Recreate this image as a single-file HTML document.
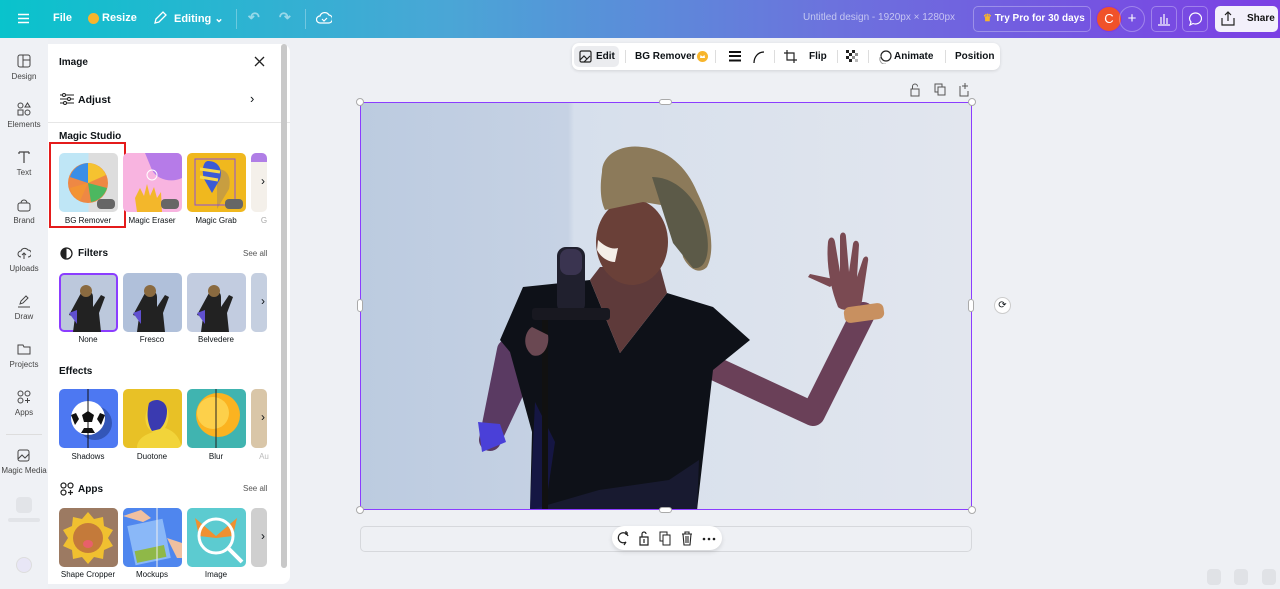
<!DOCTYPE html>
<html><head><meta charset="utf-8">
<style>
*{box-sizing:border-box;margin:0;padding:0}
body{width:1280px;height:589px;overflow:hidden;background:#eef0f4;font-family:"Liberation Sans",sans-serif;color:#0d1216;position:relative}
.top{position:absolute;left:0;top:0;width:1280px;height:38px;background:linear-gradient(90deg,#09c3cc 0%,#4aa6d6 35%,#6c72dd 65%,#7b3fe4 100%);color:#fff;font-size:11px;font-weight:bold}
.top span{position:absolute;top:12px}
.rail{position:absolute;left:0;top:38px;width:48px;height:551px;background:#eff1f5}
.rail .it{position:absolute;left:0;width:48px;text-align:center;font-size:8px;color:#444}
.rail svg{display:block;margin:0 auto 4px}
.panel{position:absolute;left:48px;top:44px;width:242px;height:540px;background:#fff;border-radius:0 8px 8px 0;overflow:hidden}
.panel .t{position:absolute;font-size:10px;font-weight:bold}
.panel .lbl{position:absolute;font-size:8px;text-align:center;width:64px}
.th{position:absolute;width:59px;height:59px;border-radius:5px;overflow:hidden}
.sb{position:absolute;left:281px;top:44px;width:6px;height:524px;background:#eee;border-radius:3px}
.sb div{width:6px;height:524px;background:#c8c8c8;border-radius:3px}
.tb{position:absolute;left:572px;top:43px;width:428px;height:27px;background:#fff;border-radius:7px;box-shadow:0 1px 3px rgba(0,0,0,.12);font-size:10px;font-weight:bold}
.tb span{position:absolute;top:8px}
.h{position:absolute;width:8px;height:8px;border-radius:50%;background:#fff;border:1px solid #aaa}
</style></head><body>
<div class="top">
<svg style="position:absolute;left:18px;top:13px" width="11" height="11"><path d="M0 1.5h11M0 5.5h11M0 9.5h11" stroke="#fff" stroke-width="1.4"/></svg>
<span style="left:53px">File</span>
<svg style="position:absolute;left:88px;top:13px" width="11" height="11"><circle cx="5.5" cy="5.5" r="5.5" fill="#f7b52c"/></svg>
<span style="left:102px">Resize</span>
<svg style="position:absolute;left:153px;top:11px" width="14" height="14"><path d="M2 12l1-4 7-7 3 3-7 7z" stroke="#fff" fill="none" stroke-width="1.3"/></svg>
<span style="left:174px">Editing ⌄</span>
<div style="position:absolute;left:236px;top:9px;width:1px;height:20px;background:rgba(255,255,255,.3)"></div>
<span style="left:248px;color:rgba(255,255,255,.5);font-size:14px;top:9px">↶</span>
<span style="left:279px;color:rgba(255,255,255,.5);font-size:14px;top:9px">↷</span>
<div style="position:absolute;left:305px;top:9px;width:1px;height:20px;background:rgba(255,255,255,.3)"></div>
<svg style="position:absolute;left:316px;top:11px" width="16" height="14"><path d="M4 12a3.5 3.5 0 010-7 5 5 0 019-1 4 4 0 01-1 8z M6 8l2 2 3-3" stroke="#fff" fill="none" stroke-width="1.2"/></svg>
<span style="left:803px;font-weight:normal;color:rgba(255,255,255,.6);font-size:10px">Untitled design - 1920px × 1280px</span>
<div style="position:absolute;left:973px;top:6px;width:118px;height:26px;border:1px solid rgba(255,255,255,.3);border-radius:5px"></div>
<span style="left:983px;font-size:10px;top:13px"><span style="color:#f7b52c;position:static">♛</span> Try Pro for 30 days</span>
<div style="position:absolute;left:1096px;top:6px;width:26px;height:26px;border-radius:50%;background:#f0522a;border:1px solid #7b3fe4;text-align:center;line-height:24px;font-size:13px;font-weight:normal">C</div>
<div style="position:absolute;left:1119px;top:6px;width:26px;height:26px;border-radius:50%;border:1px solid rgba(255,255,255,.3);text-align:center;line-height:24px;font-size:15px;font-weight:normal">+</div>
<div style="position:absolute;left:1151px;top:6px;width:26px;height:26px;border-radius:5px;border:1px solid rgba(255,255,255,.3)"></div>
<svg style="position:absolute;left:1157px;top:12px" width="14" height="14"><path d="M1 13h12M4 12V5M7 12V2M10 12V6" stroke="#fff" stroke-width="1.2"/></svg>
<div style="position:absolute;left:1182px;top:6px;width:26px;height:26px;border-radius:5px;border:1px solid rgba(255,255,255,.3)"></div>
<svg style="position:absolute;left:1188px;top:12px" width="14" height="14"><path d="M7 1a6 5.5 0 11-2 10.5L2 13l1-3A6 5.5 0 017 1z" stroke="#fff" fill="none" stroke-width="1.2"/></svg>
<div style="position:absolute;left:1215px;top:6px;width:63px;height:26px;border-radius:5px;background:#f3f0fb;color:#111;font-size:10px;line-height:26px;padding-left:32px">Share</div>
<svg style="position:absolute;left:1221px;top:11px" width="14" height="15"><path d="M7 10V1M4 4l3-3 3 3M1 7v7h12V7" stroke="#222" fill="none" stroke-width="1.2"/></svg>
</div>

<div class="rail">
<div class="it" style="top:16px"><svg width="14" height="14"><rect x="1" y="1" width="12" height="12" rx="2" stroke="#444" fill="none"/><path d="M6 1v12M6 6h7" stroke="#444"/></svg>Design</div>
<div class="it" style="top:64px"><svg width="14" height="14"><circle cx="3.5" cy="3.5" r="2.5" stroke="#444" fill="none"/><path d="M10.5 1l2.5 4h-5z" stroke="#444" fill="none"/><rect x="1" y="8" width="5" height="5" stroke="#444" fill="none"/><circle cx="10.5" cy="10.5" r="2.5" stroke="#444" fill="none"/></svg>Elements</div>
<div class="it" style="top:112px"><svg width="14" height="14"><path d="M2 2h10M7 2v11M2 2v2M12 2v2" stroke="#444" stroke-width="1.2" fill="none"/></svg>Text</div>
<div class="it" style="top:160px"><svg width="14" height="14"><rect x="1" y="5" width="12" height="8" rx="2" stroke="#444" fill="none"/><path d="M4 5a3 3 0 016 0" stroke="#444" fill="none"/></svg>Brand</div>
<div class="it" style="top:208px"><svg width="14" height="14"><path d="M4 11a3 3 0 010-6 4 4 0 017-1 3.5 3.5 0 010 7M7 13V7M5 9l2-2 2 2" stroke="#444" fill="none"/></svg>Uploads</div>
<div class="it" style="top:256px"><svg width="14" height="14"><path d="M3 10l1-3 5-5 2 2-5 5zM1 13h12" stroke="#444" fill="none"/></svg>Draw</div>
<div class="it" style="top:304px"><svg width="14" height="14"><path d="M1 3h5l1 2h6v7H1z" stroke="#444" fill="none"/></svg>Projects</div>
<div class="it" style="top:352px"><svg width="14" height="14"><circle cx="3.5" cy="3.5" r="2.5" stroke="#444" fill="none"/><circle cx="10.5" cy="3.5" r="2.5" stroke="#444" fill="none"/><circle cx="3.5" cy="10.5" r="2.5" stroke="#444" fill="none"/><path d="M10.5 8v5M8 10.5h5" stroke="#444"/></svg>Apps</div>
<div style="position:absolute;left:6px;top:396px;width:36px;height:1px;background:#ddd"></div>
<div class="it" style="top:410px"><svg width="14" height="14"><rect x="1" y="2" width="11" height="11" rx="2" stroke="#444" fill="none"/><path d="M1 11l4-4 3 3 4-4" stroke="#444" fill="none"/></svg>Magic Media</div>
<div style="position:absolute;left:16px;top:459px;width:16px;height:16px;border-radius:4px;background:#e2e4e8"></div>
<div style="position:absolute;left:8px;top:480px;width:32px;height:4px;border-radius:2px;background:#e2e4e8"></div>
<div style="position:absolute;left:16px;top:519px;width:16px;height:16px;border-radius:50%;background:#e8e6f6;border:1px solid #ddd"></div>
</div>

<div class="panel">
<div class="t" style="left:11px;top:13px">Image</div>
<svg style="position:absolute;left:206px;top:12px" width="11" height="11"><path d="M1 1l9 9M10 1l-9 9" stroke="#222" stroke-width="1.3"/></svg>
<svg style="position:absolute;left:12px;top:49px" width="14" height="12"><path d="M0 2h14M0 6h14M0 10h14" stroke="#222"/><circle cx="4" cy="2" r="1.5" fill="#fff" stroke="#222"/><circle cx="9" cy="6" r="1.5" fill="#fff" stroke="#222"/><circle cx="5" cy="10" r="1.5" fill="#fff" stroke="#222"/></svg>
<div class="t" style="left:30px;top:50px;font-size:10.5px">Adjust</div>
<div style="position:absolute;left:202px;top:47px;font-size:13px">›</div>
<div style="position:absolute;left:0;top:78px;width:242px;height:1px;background:#e6e6e6"></div>
<div class="t" style="left:11px;top:87px">Magic Studio</div>
<div class="th" style="left:11px;top:109px;background:linear-gradient(90deg,#bfe6f6 50%,#ddd 50%)"><svg width="59" height="59"><circle cx="29" cy="30" r="20" fill="#e84"/><path d="M29 10a20 20 0 00-18 14l18 6z" fill="#3a8ee6"/><path d="M29 10a20 20 0 0118 12l-18 8z" fill="#f5c230"/><path d="M11 35a20 20 0 0010 13l8-18z" fill="#f39433"/><path d="M48 35a20 20 0 01-16 14l-3-19z" fill="#4cb860"/><rect x="38" y="46" width="18" height="10" rx="4" fill="#666"/></svg></div>
<div style="position:absolute;left:1px;top:98px;width:77px;height:86px;border:2px solid #e41b1b"></div>
<div class="lbl" style="left:8px;top:172px">BG Remover</div>
<div class="th" style="left:75px;top:109px;background:#f8b4e0"><svg width="59" height="59"><path d="M22 0h37v25c-10 5-25 2-30-8z" fill="#b67be8"/><circle cx="29" cy="22" r="5" fill="none" stroke="#fff"/><path d="M12 45l5-10 4 8 3-12 3 12 4-9 3 11 4-6 1 20H14z" fill="#f3b72b"/><rect x="38" y="46" width="18" height="10" rx="4" fill="#666"/></svg></div>
<div class="lbl" style="left:72px;top:172px">Magic Eraser</div>
<div class="th" style="left:139px;top:109px;background:#f0b81e"><svg width="59" height="59"><path d="M30 16c12 0 14 10 12 20l-12 20z" fill="#c89e40"/><path d="M21 8c10 0 15 8 12 18l-8 14-8-14C14 16 17 8 21 8z" fill="#3b5bd6"/><path d="M13 16l20 3M13 24l18 3" stroke="#f7d84a" stroke-width="3"/><rect x="8" y="6" width="40" height="46" fill="none" stroke="#8a4fd9"/><rect x="38" y="46" width="18" height="10" rx="4" fill="#666"/></svg></div>
<div class="lbl" style="left:136px;top:172px">Magic Grab</div>
<div class="th" style="left:203px;top:109px;width:16px;background:linear-gradient(#b07ee6 15%,#f4f0ea 15%)"></div>
<div style="position:absolute;left:213px;top:130px;font-size:12px">›</div>
<div class="lbl" style="left:206px;top:172px;width:20px;color:#aaa">G</div>

<svg style="position:absolute;left:12px;top:203px" width="13" height="13"><circle cx="6.5" cy="6.5" r="5.5" stroke="#222" fill="none" stroke-width="1.3"/><path d="M6.5 1a5.5 5.5 0 000 11" fill="#222"/></svg>
<div class="t" style="left:30px;top:204px">Filters</div>
<div style="position:absolute;left:195px;top:205px;font-size:8px;color:#555">See all</div>
<div class="th" style="left:11px;top:229px;border:2px solid #8b3dff;background:#bcc8dc"></div>
<div class="th" style="left:75px;top:229px;background:#b0c0da"></div>
<div class="th" style="left:139px;top:229px;background:#c2cce0"></div>
<div class="th" style="left:203px;top:229px;width:16px;background:#c5cfe0"></div>
<svg style="position:absolute;left:11px;top:229px" width="208" height="59">
<g id="f"><path d="M22 20c6-4 12-2 12 4v10l8-12 4 2-6 16 2 19H14l2-15-6-2z" fill="#222"/><circle cx="27" cy="18" r="6" fill="#8a6a40"/><path d="M10 40l8-3v14z" fill="#6050d0"/></g>
<use href="#f" x="64"/><use href="#f" x="128"/></svg>
<div style="position:absolute;left:213px;top:250px;font-size:12px">›</div>
<div class="lbl" style="left:8px;top:291px">None</div>
<div class="lbl" style="left:72px;top:291px">Fresco</div>
<div class="lbl" style="left:136px;top:291px">Belvedere</div>

<div class="t" style="left:11px;top:322px">Effects</div>
<div class="th" style="left:11px;top:345px;background:#4d78f2"><svg width="59" height="59"><circle cx="36" cy="34" r="17" fill="#3356b8"/><circle cx="29" cy="29" r="17" fill="#fff"/><path d="M29 22l6 4-2 7h-8l-2-7z" fill="#111"/><path d="M12 26l5-2 3 6-4 6M46 26l-5-2-3 6 4 6M22 44l3-5h8l3 5" fill="#111"/><path d="M29 0v59" stroke="#111"/></svg></div>
<div class="lbl" style="left:8px;top:408px">Shadows</div>
<div class="th" style="left:75px;top:345px;background:#e8c126"><svg width="59" height="59"><path d="M14 59c0-10 10-14 16-16-8-4-9-14-6-22 3-8 14-10 19-4 4 6 3 16-1 22 6 2 14 6 17 20z" fill="#f2d43a"/><path d="M26 14c6-6 18-3 18 8 0 8-3 14-7 18l-8 2c-4-6-6-16-3-28z" fill="#3a3ab0"/></svg></div>
<div class="lbl" style="left:72px;top:408px">Duotone</div>
<div class="th" style="left:139px;top:345px;background:#40b4b0"><svg width="59" height="59"><circle cx="31" cy="26" r="22" fill="#fbb320"/><circle cx="26" cy="24" r="16" fill="#fdd04a"/><path d="M29 0v59" stroke="#222"/></svg></div>
<div class="lbl" style="left:136px;top:408px">Blur</div>
<div class="th" style="left:203px;top:345px;width:16px;background:#d9c6a8"></div>
<div style="position:absolute;left:213px;top:366px;font-size:12px">›</div>
<div class="lbl" style="left:206px;top:408px;width:20px;color:#bbb">Au</div>

<svg style="position:absolute;left:12px;top:438px" width="14" height="14"><circle cx="3.5" cy="3.5" r="2.5" stroke="#222" fill="none" stroke-width="1.2"/><circle cx="10.5" cy="3.5" r="2.5" stroke="#222" fill="none" stroke-width="1.2"/><circle cx="3.5" cy="10.5" r="2.5" stroke="#222" fill="none" stroke-width="1.2"/><path d="M10.5 8v5M8 10.5h5" stroke="#222" stroke-width="1.2"/></svg>
<div class="t" style="left:30px;top:440px">Apps</div>
<div style="position:absolute;left:195px;top:440px;font-size:8px;color:#555">See all</div>
<div class="th" style="left:11px;top:464px;background:#9c7a62"><svg width="59" height="59"><path d="M29 4l6 7 9-2 1 9 9 4-5 8 5 8-9 4-1 9-9-2-6 7-6-7-9 2-1-9-9-4 5-8-5-8 9-4 1-9 9 2z" fill="#f0c030"/><circle cx="29" cy="30" r="15" fill="#c47a3a"/><ellipse cx="29" cy="36" rx="5" ry="4" fill="#e8606a"/></svg></div>
<div class="lbl" style="left:8px;top:526px">Shape Cropper</div>
<div class="th" style="left:75px;top:464px;background:#4f86ee"><svg width="59" height="59"><rect x="8" y="14" width="36" height="40" fill="#8ab8f8" transform="rotate(-12 26 34)"/><rect x="10" y="40" width="30" height="12" fill="#8fb848" transform="rotate(-12 26 34)"/><path d="M0 8l18-6 10 8-8 4z" fill="#f0c0a0"/><path d="M44 30l10 20h5V35z" fill="#f0c0a0"/><path d="M34 0v59" stroke="#eee"/></svg></div>
<div class="lbl" style="left:72px;top:526px">Mockups</div>
<div class="th" style="left:139px;top:464px;background:#5ccbd0"><svg width="59" height="59"><path d="M29 28L8 10l4 18 17 2zM29 28L50 10l-4 18-17 2z" fill="#f09030"/><circle cx="29" cy="28" r="17" fill="none" stroke="#fff" stroke-width="3"/><path d="M41 40l14 14" stroke="#fff" stroke-width="4"/></svg></div>
<div class="lbl" style="left:136px;top:526px">Image</div>
<div class="th" style="left:203px;top:464px;width:16px;background:#cfcfcf"></div>
<div style="position:absolute;left:213px;top:485px;font-size:12px">›</div>
</div>
<div class="sb"><div></div></div>

<div class="tb">
<div style="position:absolute;left:2px;top:3px;width:45px;height:21px;background:#ebecef;border-radius:5px"></div>
<svg style="position:absolute;left:7px;top:7px" width="13" height="13"><rect x="1" y="1" width="11" height="11" rx="1.5" stroke="#222" fill="none" stroke-width="1.2"/><path d="M1 10l4-4 3 3M5 12l6-6" stroke="#222" stroke-width="1.2" fill="none"/></svg>
<span style="left:24px">Edit</span>
<div style="position:absolute;left:53px;top:7px;width:1px;height:13px;background:#ddd"></div>
<span style="left:63px">BG Remover</span>
<svg style="position:absolute;left:125px;top:8px" width="11" height="11"><circle cx="5.5" cy="5.5" r="5.5" fill="#f7b52c"/><path d="M3 7l.5-3 2 1.5 2-1.5.5 3z" fill="#fff"/></svg>
<div style="position:absolute;left:143px;top:7px;width:1px;height:13px;background:#ddd"></div>
<svg style="position:absolute;left:157px;top:8px" width="12" height="11"><path d="M0 1h12M0 5h12M0 9.5h12" stroke="#111" stroke-width="2"/></svg>
<svg style="position:absolute;left:181px;top:8px" width="12" height="12"><path d="M1 12C1 6 5 1 11 1" stroke="#111" fill="none" stroke-width="1.3"/></svg>
<div style="position:absolute;left:202px;top:7px;width:1px;height:13px;background:#ddd"></div>
<svg style="position:absolute;left:212px;top:7px" width="13" height="13"><path d="M3 0v10h10M0 3h10v10" stroke="#222" fill="none" stroke-width="1.2"/></svg>
<span style="left:237px">Flip</span>
<div style="position:absolute;left:265px;top:7px;width:1px;height:13px;background:#ddd"></div>
<svg style="position:absolute;left:274px;top:7px" width="13" height="13"><g fill="#222"><rect x="0" y="0" width="3" height="3"/><rect x="6" y="0" width="3" height="3"/><rect x="3" y="3" width="3" height="3"/><rect x="9" y="3" width="3" height="3" opacity=".5"/><rect x="0" y="6" width="3" height="3"/><rect x="6" y="6" width="3" height="3" opacity=".5"/><rect x="3" y="9" width="3" height="3"/><rect x="9" y="9" width="3" height="3" opacity=".3"/></g></svg>
<div style="position:absolute;left:296px;top:7px;width:1px;height:13px;background:#ddd"></div>
<svg style="position:absolute;left:306px;top:7px" width="14" height="14"><circle cx="8" cy="6" r="5" stroke="#222" fill="none" stroke-width="1.2"/><path d="M3 6a5 5 0 005 8" stroke="#999" fill="none"/></svg>
<span style="left:322px">Animate</span>
<div style="position:absolute;left:373px;top:7px;width:1px;height:13px;background:#ddd"></div>
<span style="left:383px">Position</span>
</div>

<svg style="position:absolute;left:909px;top:83px" width="60" height="14"><path d="M2 6h8v7H2zM3.5 6V3.5a2.5 2.5 0 015 0" stroke="#555" fill="none"/><rect x="26" y="1" width="7" height="8" stroke="#555" fill="none"/><rect x="29" y="4" width="7" height="8" stroke="#555" fill="#eef0f4"/><path d="M51 3v10h8V8M56 0v6M53 3h6" stroke="#555" fill="none"/></svg>

<svg style="position:absolute;left:360px;top:102px" width="612" height="408" viewBox="0 0 612 408">
<defs><linearGradient id="bg" x1="0" x2="1"><stop offset="0" stop-color="#bccbe0"/><stop offset=".34" stop-color="#c6d2e4"/><stop offset=".35" stop-color="#d6dfec"/><stop offset="1" stop-color="#e2e6ee"/></linearGradient></defs>
<rect width="612" height="408" fill="url(#bg)"/>
<!-- raised arm -->
<path d="M345 262L453 312 503 212" stroke="#6a4058" stroke-width="24" fill="none" stroke-linejoin="round" stroke-linecap="round"/>
<path d="M478 205c-8-20-12-45-10-65 1-6 6-6 7 0l5 30 0-35c0-6 6-6 6 0l3 35 4-28c1-5 6-4 6 1l-2 32 6-18c2-4 6-3 5 2l-6 40c-2 8-18 12-24 6z" fill="#7a4a52"/>
<path d="M470 185l-22-10 2-3 28 6z" fill="#7a4a52"/>
<rect x="484" y="203" width="40" height="16" rx="6" fill="#c89060" transform="rotate(-8 504 211)"/>
<!-- left arm -->
<path d="M148 248L130 338 180 232" stroke="#5a3a62" stroke-width="22" fill="none" stroke-linejoin="round" stroke-linecap="round"/>
<path d="M118 320l22 2 6 18-24 10z" fill="#4a40d8"/>
<!-- shirt -->
<path d="M140 238L163 185 230 178 260 251 307 191 353 205 390 238 353 268 337 408 170 408 172 330 150 250z" fill="#0e1118"/>
<path d="M170 408h167l2-50-30 20-70 10z" fill="#181a30"/>
<path d="M175 300l20 40-10 68h-15z" fill="#1a1a60" opacity=".6"/>
<!-- neck -->
<path d="M230 178L260 251 307 191 300 165 240 165z" fill="#5e3a3a"/>
<!-- face -->
<ellipse cx="272" cy="140" rx="36" ry="43" fill="#6a4038"/>
<path d="M238 138c6 6 14 10 20 8l-3 14c-8 0-15-6-18-12z" fill="#f4eee8"/>
<!-- headwrap -->
<path d="M242 70c0-18 20-28 40-25 25 2 45 20 55 45 15 30 18 60 10 75-8 8-18 2-24-10l-10-50-30-5-38 8c-5-10-5-25-3-38z" fill="#8c7a5a"/>
<path d="M292 75c28 0 50 28 55 58 3 20-2 35-14 33l-20-25z" fill="#5c5a48"/>
<!-- mic -->
<rect x="197" y="145" width="28" height="66" rx="9" fill="#20202e"/>
<rect x="200" y="147" width="22" height="26" rx="8" fill="#3a3450"/>
<rect x="172" y="206" width="78" height="12" rx="3" fill="#181820"/>
<rect x="182" y="218" width="6" height="190" fill="#111"/>
<path d="M172 225c-8 5-10 20 0 28 10 4 18-8 16-20z" fill="#6a4852"/>
</svg>
<div style="position:absolute;left:360px;top:102px;width:612px;height:408px;border:1.5px solid #8b3dff"></div>
<div class="h" style="left:356px;top:98px"></div><div class="h" style="left:968px;top:98px"></div>
<div class="h" style="left:356px;top:506px"></div><div class="h" style="left:968px;top:506px"></div>
<div style="position:absolute;left:659px;top:99px;width:13px;height:6px;border-radius:3px;background:#fff;border:1px solid #aaa"></div>
<div style="position:absolute;left:659px;top:507px;width:13px;height:6px;border-radius:3px;background:#fff;border:1px solid #aaa"></div>
<div style="position:absolute;left:357px;top:299px;width:6px;height:13px;border-radius:3px;background:#fff;border:1px solid #aaa"></div>
<div style="position:absolute;left:968px;top:299px;width:6px;height:13px;border-radius:3px;background:#fff;border:1px solid #aaa"></div>
<div style="position:absolute;left:994px;top:297px;width:17px;height:17px;border-radius:50%;background:#fff;border:1px solid #ccc;font-size:10px;text-align:center;line-height:15px">⟳</div>

<div style="position:absolute;left:360px;top:526px;width:612px;height:26px;border:1px solid #d6d8dc;border-radius:5px"></div>
<div style="position:absolute;left:612px;top:526px;width:110px;height:24px;background:#fff;border-radius:12px;box-shadow:0 2px 5px rgba(0,0,0,.12)"></div>
<svg style="position:absolute;left:615px;top:530px" width="105" height="16"><path d="M13 6a5 5 0 10-2 6l-2 3M11 1v4M9 3h4" stroke="#222" fill="none" stroke-width="1.2"/><path d="M25 7h8v8h-8zM27 7V4a2 2 0 014 0M29 9v4" stroke="#222" fill="none" stroke-width="1.2"/><rect x="45" y="2" width="7" height="9" stroke="#222" fill="none"/><rect x="48" y="5" width="7" height="10" stroke="#222" fill="#fff"/><path d="M67 4h10M70 4V2h4v2M68 4l1 11h6l1-11M71 6v7M73 6v7" stroke="#222" fill="none" stroke-width="1.1"/><circle cx="89" cy="9" r="1.3" fill="#222"/><circle cx="94" cy="9" r="1.3" fill="#222"/><circle cx="99" cy="9" r="1.3" fill="#222"/></svg>

<div style="position:absolute;left:1207px;top:569px;width:14px;height:16px;border-radius:4px;background:#e0e2e6"></div>
<div style="position:absolute;left:1234px;top:569px;width:14px;height:16px;border-radius:4px;background:#e0e2e6"></div>
<div style="position:absolute;left:1262px;top:569px;width:14px;height:16px;border-radius:4px;background:#e0e2e6"></div>
</body></html>
